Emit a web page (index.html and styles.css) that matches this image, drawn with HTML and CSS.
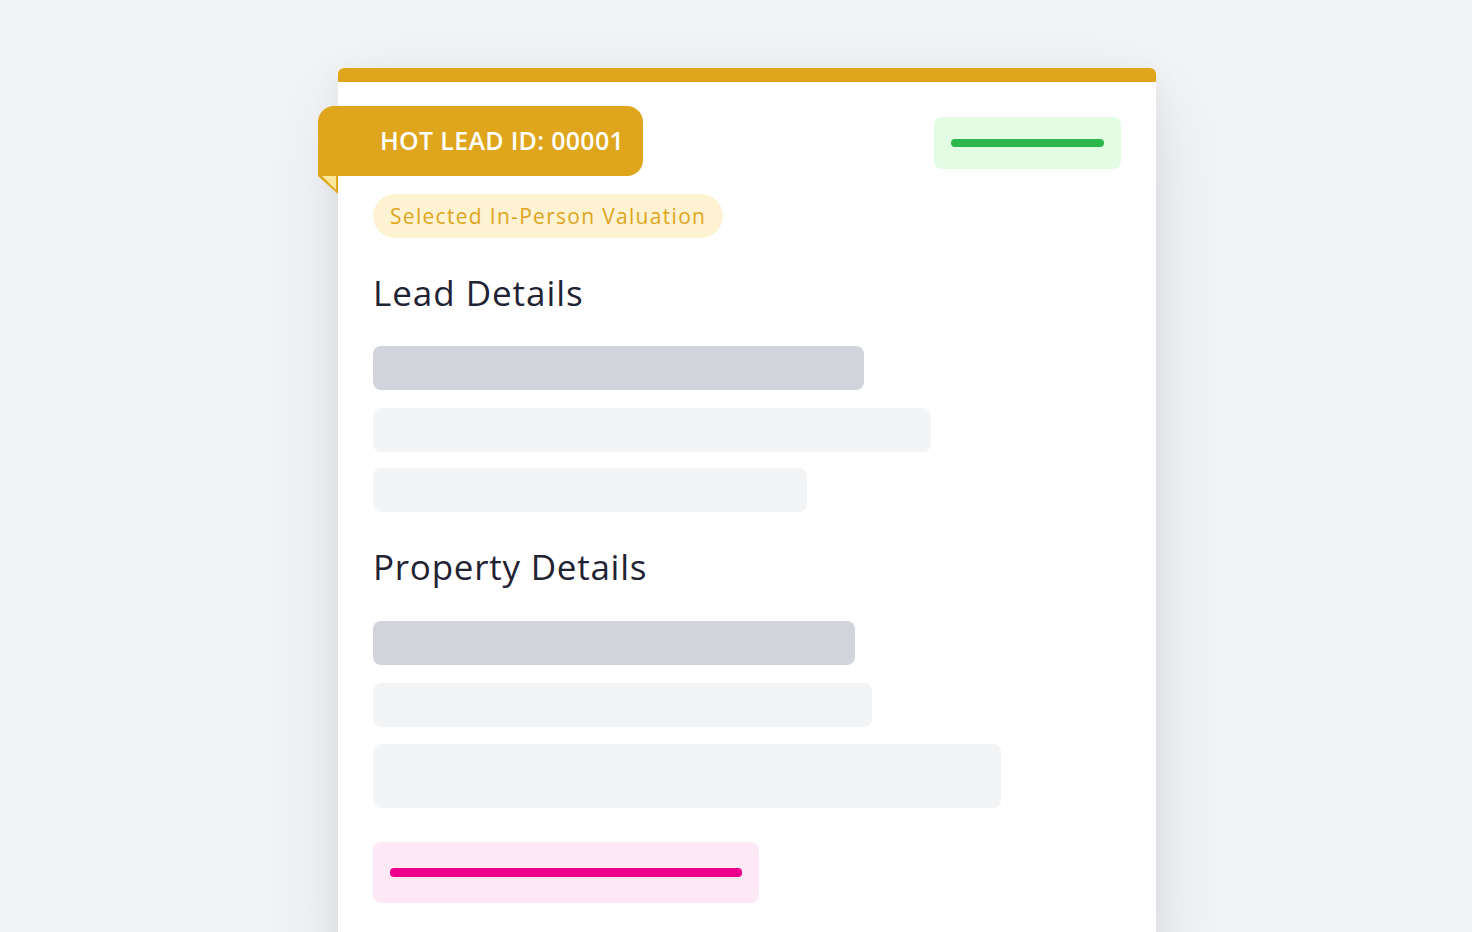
FILE: index.html
```html
<!DOCTYPE html>
<html>
<head>
<meta charset="utf-8">
<link rel="stylesheet" href="styles.css">
</head>
<body>
<div class="stage">
  <div class="card">
    <div class="card-bar"></div>
    <div class="card-body">
      <div class="head-row">
        <div class="tag">
          <span class="tag-text">HOT LEAD ID: 00001</span>
          <span class="tag-fold"></span>
        </div>
        <div class="status status-green"><span class="line line-green"></span></div>
      </div>
      <div class="badge">Selected In-Person Valuation</div>

      <h2 class="section-title title-lead">Lead Details</h2>
      <div class="skel skel-dark w1"></div>
      <div class="skel skel-light w2"></div>
      <div class="skel skel-light w3"></div>

      <h2 class="section-title title-prop">Property Details</h2>
      <div class="skel skel-dark w4"></div>
      <div class="skel skel-light w5"></div>
      <div class="skel skel-light w6 tall"></div>

      <div class="status status-pink"><span class="line line-pink"></span></div>
    </div>
  </div>
</div>
</body>
</html>
```

FILE: styles.css
```css
* { box-sizing: border-box; }
html, body {
  margin: 0;
  padding: 0;
  background: #f3f4f6;
  height: 932px;
  overflow: hidden;
  font-family: "Open Sans", "Liberation Sans", sans-serif;
}
.stage {
  padding-top: 68px;
  padding-left: 338px;
}
.card {
  width: 818px;
  height: 900px;
  background: #ffffff;
  border-radius: 6px 6px 0 0;
  box-shadow: 0 30px 90px rgba(17, 24, 39, 0.10), 0 8px 30px rgba(17, 24, 39, 0.05);
}
.card-bar {
  height: 14px;
  background: #dfa51c;
  border-radius: 6px 6px 0 0;
}
.card-body {
  padding: 24px 35px 0 35px;
}
.head-row {
  display: flex;
  justify-content: space-between;
  align-items: flex-start;
}
.tag {
  position: relative;
  margin-left: -55px;
  width: 325px;
  height: 70px;
  background: #dfa51c;
  border-radius: 16px 16px 16px 0;
  display: flex;
  align-items: center;
  padding-left: 62px;
  padding-bottom: 2px;
}
.tag-text {
  color: #ffffff;
  font-size: 25px;
  font-weight: 600;
  letter-spacing: 0.3px;
  white-space: nowrap;
}
.tag-fold {
  position: absolute;
  left: 0;
  top: 70px;
  width: 20px;
  height: 18px;
  background: #dfa51c;
  clip-path: polygon(0 0, 100% 0, 100% 100%);
}
.tag-fold::after {
  content: "";
  position: absolute;
  left: 4px;
  top: 0;
  width: 14px;
  height: 14px;
  background: #fde79a;
  clip-path: polygon(0 0, 100% 0, 100% 100%);
}
.status {
  display: flex;
  align-items: center;
  border-radius: 8px;
}
.status-green {
  margin-top: 11px;
  width: 187px;
  height: 52px;
  background: #e2fde4;
  padding: 0 17px;
}
.line {
  display: block;
  width: 100%;
  height: 8px;
  border-radius: 4px;
}
.line-green { background: #2db84e; }
.badge {
  margin-top: 18px;
  width: 350px;
  height: 44px;
  border-radius: 22px;
  background: #fdf3d3;
  color: #dfa51c;
  font-size: 21px;
  line-height: 44px;
  padding-left: 17px;
  letter-spacing: 1.3px;
  white-space: nowrap;
}
.section-title {
  margin: 0;
  font-weight: 400;
  color: #1f2333;
  font-size: 35px;
  line-height: 44px;
}
.title-lead { margin-top: 33px; margin-bottom: 31px; letter-spacing: 0.95px; }
.title-prop { margin-top: 33px; margin-bottom: 32px; letter-spacing: 0.75px; }
.skel {
  height: 44px;
  border-radius: 8px;
  margin-bottom: 17px;
}
.skel-dark { background: #d1d5db; }
.skel-light { background: #f3f4f6; }
.w1 { width: 491px; margin-bottom: 18px; }
.w2 { width: 558px; margin-bottom: 16px; }
.w3 { width: 434px; margin-bottom: 0; }
.w4 { width: 482px; margin-bottom: 18px; }
.w5 { width: 499px; margin-bottom: 17px; }
.w6 { width: 628px; }
.tall { height: 64px; margin-bottom: 34px; }
.status-pink {
  width: 386px;
  height: 61px;
  background: #fde9f6;
  padding: 0 17px;
}
.line-pink { background: #ec008c; height: 9px; }
```
